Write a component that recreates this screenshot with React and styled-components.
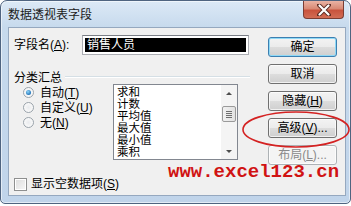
import React from 'react';
import styled, { createGlobalStyle } from 'styled-components';

const Global = createGlobalStyle`
  html, body { margin: 0; padding: 0; background: #fff; }
  body {
    font-family: "Liberation Sans", "Noto Sans CJK SC", sans-serif;
    font-size: 12px;
    color: #000;
  }
`;

const Window = styled.div`
  position: relative;
  width: 351px;
  height: 204px;
  box-sizing: border-box;
  border: 1px solid #4f6480;
  border-radius: 7px 7px 5px 5px;
  background: linear-gradient(#dce9f6 0, #c7daed 26px, #c0d4ea 100%);
  box-shadow: inset 0 0 0 1px rgba(255,255,255,0.55);
  padding: 0 4px 7px 7px;
  display: flex;
  flex-direction: column;
  overflow: hidden;
`;

const TitleBar = styled.div`
  height: 26px;
  display: flex;
  align-items: flex-start;
  justify-content: space-between;
`;

const Title = styled.div`
  margin-top: 6px;
  font-size: 12px;
  line-height: 16px;
  color: #1b1b1b;
`;

const CloseBtn = styled.div`
  width: 41px;
  height: 18px;
  margin-right: 2px;
  box-sizing: border-box;
  border: 1px solid #7b3d33;
  border-top: none;
  border-radius: 0 0 4px 4px;
  background: linear-gradient(#eab3a4 0, #d98a75 45%, #c9533d 55%, #d26d55 100%);
  display: flex;
  align-items: center;
  justify-content: center;
`;

const Client = styled.div`
  flex: 1;
  box-sizing: border-box;
  border: 1px solid #95a8bf;
  background: #f0f0f0;
  padding-left: 5px;
  display: flex;
  gap: 18px;
`;

const LeftCol = styled.div`
  width: 236px;
  display: flex;
  flex-direction: column;
`;

const FieldRow = styled.div`
  margin-top: 7px;
  height: 20px;
  display: flex;
  align-items: center;
`;

const Label = styled.span`
  width: ${p => p.w || 'auto'};
  white-space: nowrap;
  line-height: 14px;
`;

const TextBox = styled.div`
  width: 167px;
  height: 20px;
  box-sizing: border-box;
  border: 1px solid #abadb3;
  border-top-color: #7a7e86;
  background: #fff;
  padding: 2px;
  display: flex;
`;

const Selected = styled.div`
  flex: 1;
  background: #000;
  color: #fff;
  padding-left: 2px;
  line-height: 14px;
`;

const GroupHeader = styled.div`
  margin-top: 16px;
  height: 13px;
  display: flex;
  align-items: center;
  gap: 3px;
`;

const GroupLine = styled.div`
  flex: 1;
  height: 1px;
  margin-top: -2px;
  background: #d5dfe5;
  box-shadow: 0 1px 0 #fff;
`;

const GroupBody = styled.div`
  display: flex;
`;

const RadioCol = styled.div`
  width: 99px;
  box-sizing: border-box;
  padding: 1px 0 0 9px;
  display: flex;
  flex-direction: column;
`;

const RadioRow = styled.div`
  height: 15px;
  display: flex;
  align-items: center;
  gap: 6px;
  line-height: 14px;
  white-space: nowrap;
`;

const Radio = styled.span`
  flex: none;
  width: 11px;
  height: 11px;
  box-sizing: border-box;
  border-radius: 50%;
  border: 1px solid #9aa3ab;
  background: radial-gradient(circle at 50% 50%, #e9ebee 0, #f9f9f9 70%);
  display: flex;
  align-items: center;
  justify-content: center;
  &::after {
    content: '';
    display: ${p => (p.checked ? 'block' : 'none')};
    width: 5px;
    height: 5px;
    border-radius: 50%;
    background: radial-gradient(circle at 40% 35%, #8fd6f9 0, #1d6fb6 75%);
  }
`;

const ListBox = styled.div`
  width: 125px;
  height: 76px;
  box-sizing: border-box;
  border: 1px solid #828790;
  background: #fff;
  display: flex;
  overflow: hidden;
`;

const Items = styled.div`
  flex: 1;
  padding: 1px 0 0 3px;
  font-size: 11.5px;
  line-height: 12px;
`;

const ScrollBar = styled.div`
  width: 16px;
  display: flex;
  flex-direction: column;
  background: #f4f4f4;
`;

const ArrowBtn = styled.div`
  height: 16px;
  display: flex;
  align-items: center;
  justify-content: center;
  &::after {
    content: '';
    border-left: 3px solid transparent;
    border-right: 3px solid transparent;
    ${p => (p.down ? 'border-top: 3px solid #4d4d4d;' : 'border-bottom: 3px solid #4d4d4d;')}
  }
`;

const Track = styled.div`
  flex: 1;
  display: flex;
  flex-direction: column;
  align-items: center;
`;

const Thumb = styled.div`
  margin-top: 5px;
  width: 14px;
  height: 16px;
  box-sizing: border-box;
  border: 1px solid #9a9a9a;
  border-radius: 2px;
  background: linear-gradient(90deg, #f1f1f1, #e2e2e2);
  display: flex;
  flex-direction: column;
  align-items: center;
  justify-content: center;
  gap: 1px;
  span {
    width: 6px;
    height: 1px;
    background: #6f6f6f;
  }
`;

const CheckRow = styled.div`
  margin-top: 17px;
  height: 14px;
  display: flex;
  align-items: center;
  gap: 4px;
  line-height: 14px;
`;

const CheckBox = styled.span`
  width: 13px;
  height: 13px;
  box-sizing: border-box;
  border: 1px solid #8e8f8f;
  background: linear-gradient(135deg, #dcdcdc, #f8f8f8);
  box-shadow: inset 0 0 0 1px #fff;
`;

const RightCol = styled.div`
  width: 69px;
  padding-top: 9px;
  display: flex;
  flex-direction: column;
  gap: 7px;
`;

const Button = styled.div`
  height: 20px;
  box-sizing: border-box;
  border: 1px solid ${p => (p.primary ? '#3c7fb1' : p.disabled ? '#adb2b5' : '#707070')};
  border-radius: 3px;
  background: ${p =>
    p.disabled
      ? '#f4f4f4'
      : 'linear-gradient(#f3f3f3 0, #ebebeb 50%, #dddddd 50%, #cfcfcf 100%)'};
  box-shadow: ${p => (p.primary ? 'inset 0 0 0 1px #8fd9f6' : 'inset 0 0 0 1px rgba(255,255,255,0.7)')};
  color: ${p => (p.disabled ? '#8a8a8a' : '#000')};
  display: flex;
  align-items: center;
  justify-content: center;
  line-height: 14px;
  white-space: nowrap;
`;

const Watermark = styled.div`
  position: absolute;
  left: 167px;
  top: 165px;
  font-family: "Liberation Mono", "Courier New", monospace;
  font-weight: bold;
  font-size: 19px;
  line-height: 13px;
  color: #d01313;
  white-space: nowrap;
`;

const Overlay = styled.svg`
  position: absolute;
  left: -1px;
  top: -1px;
  pointer-events: none;
`;

const items = ['求和', '计数', '平均值', '最大值', '最小值', '乘积'];
const buttons = [
  { text: <>确定</>, primary: true },
  { text: <>取消</> },
  { text: <>隐藏(<u>H</u>)</> },
  { text: <>高级(<u>V</u>)...</> },
  { text: <>布局(<u>L</u>)...</>, disabled: true },
];

export default function App() {
  return (
    <>
      <Global />
      <Window>
        <TitleBar>
          <Title>数据透视表字段</Title>
          <CloseBtn>
            <svg width="14" height="12" viewBox="0 0 14 12">
              <path d="M2 1 L12 11 M12 1 L2 11" stroke="#5b2a22" strokeWidth="4" strokeLinecap="round" />
              <path d="M2.5 1.5 L11.5 10.5 M11.5 1.5 L2.5 10.5" stroke="#fff" strokeWidth="2.2" strokeLinecap="round" />
            </svg>
          </CloseBtn>
        </TitleBar>
        <Client>
          <LeftCol>
            <FieldRow>
              <Label w="68px">字段名(<u>A</u>):</Label>
              <TextBox>
                <Selected>销售人员</Selected>
              </TextBox>
            </FieldRow>
            <GroupHeader>
              <Label>分类汇总</Label>
              <GroupLine />
            </GroupHeader>
            <GroupBody>
              <RadioCol>
                <RadioRow><Radio checked /><Label>自动(<u>T</u>)</Label></RadioRow>
                <RadioRow><Radio /><Label>自定义(<u>U</u>)</Label></RadioRow>
                <RadioRow><Radio /><Label>无(<u>N</u>)</Label></RadioRow>
              </RadioCol>
              <ListBox>
                <Items>
                  {items.map(t => <div key={t}>{t}</div>)}
                </Items>
                <ScrollBar>
                  <ArrowBtn />
                  <Track>
                    <Thumb><span /><span /><span /><span /></Thumb>
                  </Track>
                  <ArrowBtn down />
                </ScrollBar>
              </ListBox>
            </GroupBody>
            <CheckRow>
              <CheckBox />
              <Label>显示空数据项(<u>S</u>)</Label>
            </CheckRow>
          </LeftCol>
          <RightCol>
            {buttons.map((b, i) => (
              <Button key={i} primary={b.primary} disabled={b.disabled}>{b.text}</Button>
            ))}
          </RightCol>
        </Client>
        <Watermark>www.excel123.cn</Watermark>
        <Overlay width="351" height="206">
          <ellipse cx="296" cy="129.5" rx="53" ry="17.5" fill="none" stroke="#d42222" strokeWidth="1.6" />
        </Overlay>
      </Window>
    </>
  );
}
